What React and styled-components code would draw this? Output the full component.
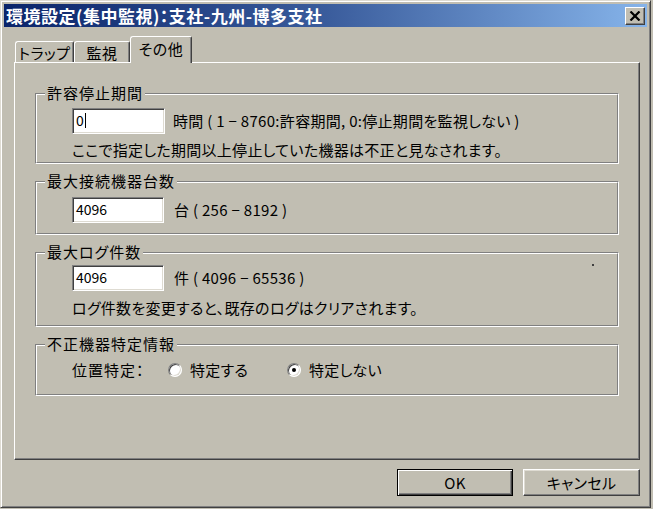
import React from 'react';
import styled, { createGlobalStyle, css } from 'styled-components';

const FACE = '#c1beb2';

const GlobalStyle = createGlobalStyle`
  html, body { margin: 0; padding: 0; background: ${FACE}; }
  body {
    font-family: "Noto Sans CJK JP", "Noto Sans", sans-serif;
    font-size: 15px;
    color: #000;
    font-feature-settings: "palt";
    letter-spacing: 0.3px;
  }
  #root { width: 653px; height: 509px; }
`;

const Window = styled.div`
  box-sizing: border-box;
  width: 651px;
  height: 508px;
  background: ${FACE};
  border: 1px solid;
  border-color: #dedbd2 #404040 #404040 #dedbd2;
  box-shadow: inset 1px 1px #fff, inset -1px -1px #808080;
  padding: 3px;
  display: flex;
  flex-direction: column;
`;

const TitleBar = styled.div`
  flex: none;
  height: 23px;
  display: flex;
  align-items: center;
  justify-content: space-between;
  padding: 0 2px 0 2px;
  background: linear-gradient(to right, #0a246a 0%, #3a5c9c 50%, #86b4ea 100%);
  color: #fff;
`;

const TitleText = styled.span`
  font-weight: 700;
  font-size: 17px;
  letter-spacing: 0.5px;
  line-height: 23px;
  white-space: nowrap;
`;

const CloseButton = styled.div`
  box-sizing: border-box;
  width: 20px;
  height: 18px;
  background: ${FACE};
  border: 1px solid;
  border-color: #fff #404040 #404040 #fff;
  box-shadow: inset -1px -1px #808080;
  display: flex;
  align-items: center;
  justify-content: center;
`;

const Body = styled.div`
  flex: 1;
  display: flex;
  flex-direction: column;
  padding: 9px 7px 0 10px;
`;

const TabStrip = styled.div`
  position: relative;
  z-index: 1;
  height: 26px;
  display: flex;
  align-items: flex-end;
  padding-left: 1px;
`;

const Tab = styled.div`
  box-sizing: border-box;
  width: ${p => p.$w}px;
  height: ${p => (p.$active ? 27 : 21)}px;
  margin-bottom: ${p => (p.$active ? -1 : 0)}px;
  padding-bottom: ${p => (p.$active ? 3 : 0)}px;
  background: ${FACE};
  border-left: 1px solid #fff;
  border-top: 1px solid #fff;
  border-right: 1px solid #404040;
  border-top-left-radius: 3px;
  border-top-right-radius: 2px;
  box-shadow: inset -1px 0 #808080;
  display: flex;
  align-items: center;
  justify-content: center;
  white-space: nowrap;
  letter-spacing: 0.5px;
`;

const Panel = styled.div`
  box-sizing: border-box;
  height: 398px;
  border: 1px solid;
  border-color: #fff #404040 #404040 #fff;
  box-shadow: inset -1px -1px #808080;
  padding: 30px 20px 0 20px;
  display: flex;
  flex-direction: column;
  gap: ${p => p.$gap}px;
`;

const Group = styled.div`
  position: relative;
  box-sizing: border-box;
  height: ${p => p.$h}px;
  border: 1px solid;
  border-color: #808080 #fff #fff #808080;
`;

const GroupInner = styled.div`
  box-sizing: border-box;
  height: 100%;
  border: 1px solid;
  border-color: #fff #808080 #808080 #fff;
  padding: ${p => p.$pt}px 0 0 35px;
  display: flex;
  flex-direction: column;
  gap: ${p => p.$gap || 0}px;
`;

const Legend = styled.span`
  position: absolute;
  top: -10px;
  left: 9px;
  padding: 0 2px;
  background: ${FACE};
  line-height: 18px;
  white-space: nowrap;
  letter-spacing: 1px;
`;

const Row = styled.div`
  display: flex;
  align-items: center;
  gap: ${p => p.$gap || 0}px;
  white-space: nowrap;
  line-height: 18px;
`;

const TextLine = styled.div`
  line-height: 18px;
  white-space: nowrap;
`;

const Field = styled.div`
  box-sizing: border-box;
  width: ${p => p.$w}px;
  height: 26px;
  background: #fff;
  border: 1px solid;
  border-color: #808080 #fff #fff #808080;
  box-shadow: inset 1px 1px #404040, inset -1px -1px #dedbd2;
  padding: 2px 0 0 3px;
  line-height: 18px;
  font-size: 14px;
  letter-spacing: 0;
  display: flex;
  align-items: flex-start;
`;

const Caret = styled.span`
  display: inline-block;
  width: 1px;
  height: 15px;
  margin: 2px 0 0 1px;
  background: #000;
`;

const Speck = styled.span`
  position: absolute;
  top: 11px;
  left: 556px;
  width: 2px;
  height: 2px;
  background: #404040;
`;

const RadioOption = styled.label`
  display: flex;
  align-items: center;
  gap: 8px;
  width: ${p => (p.$w ? `${p.$w}px` : 'auto')};
`;

const RadioCircle = styled.span`
  box-sizing: border-box;
  width: 14px;
  height: 14px;
  border-radius: 50%;
  border: 1px solid;
  border-color: #808080 #fff #fff #808080;
  box-shadow: inset 1px 1px #404040, inset -1px -1px #dedbd2;
  background: #fff;
  display: flex;
  align-items: center;
  justify-content: center;
  ${p => p.$checked && css`
    &::after {
      content: '';
      width: 4px;
      height: 4px;
      border-radius: 50%;
      background: #000;
    }
  `}
`;

const PositionLabel = styled.span`
  width: 96px;
  letter-spacing: 1px;
`;

const ButtonRow = styled.div`
  margin-top: 9px;
  display: flex;
  justify-content: flex-end;
  gap: 10px;
`;

const Button = styled.div`
  box-sizing: border-box;
  width: ${p => p.$w}px;
  height: 27px;
  background: ${FACE};
  display: flex;
  align-items: center;
  justify-content: center;
  white-space: nowrap;
  ${p => p.$default
    ? css`
        border: 1px solid #000;
        box-shadow: inset 1px 1px #fff, inset -1px -1px #404040, inset -2px -2px #808080;
      `
    : css`
        border: 1px solid;
        border-color: #fff #404040 #404040 #fff;
        box-shadow: inset -1px -1px #808080, inset 1px 1px #dedbd2;
      `}
`;

export default function App() {
  return (
    <>
      <GlobalStyle />
      <Window>
        <TitleBar>
          <TitleText>環境設定(集中監視)：支社-九州-博多支社</TitleText>
          <CloseButton>
            <svg width="12" height="10" viewBox="0 0 12 10">
              <path d="M1.5 0.5 L10.5 9.5 M10.5 0.5 L1.5 9.5" stroke="#000" strokeWidth="2.2" />
            </svg>
          </CloseButton>
        </TitleBar>
        <Body>
          <TabStrip>
            <Tab $w={59}>トラップ</Tab>
            <Tab $w={56}>監視</Tab>
            <Tab $w={62} $active>その他</Tab>
          </TabStrip>
          <Panel $gap={17}>
            <Group $h={71}>
              <Legend>許容停止期間</Legend>
              <GroupInner $pt={13} $gap={7}>
                <Row $gap={8}>
                  <Field $w={93}>0<Caret /></Field>
                  <span>時間 ( 1 − 8760:許容期間, 0:停止期間を監視しない )</span>
                </Row>
                <TextLine>ここで指定した期間以上停止していた機器は不正と見なされます。</TextLine>
              </GroupInner>
            </Group>
            <Group $h={54}>
              <Legend>最大接続機器台数</Legend>
              <GroupInner $pt={14}>
                <Row $gap={10}>
                  <Field $w={92}>4096</Field>
                  <span>台 ( 256 − 8192 )</span>
                </Row>
              </GroupInner>
            </Group>
            <Group $h={75}>
              <Legend>最大ログ件数</Legend>
              <Speck />
              <GroupInner $pt={11} $gap={8}>
                <Row $gap={10}>
                  <Field $w={92}>4096</Field>
                  <span>件 ( 4096 − 65536 )</span>
                </Row>
                <TextLine>ログ件数を変更すると、既存のログはクリアされます。</TextLine>
              </GroupInner>
            </Group>
            <Group $h={52}>
              <Legend>不正機器特定情報</Legend>
              <GroupInner $pt={15}>
                <Row>
                  <PositionLabel>位置特定：</PositionLabel>
                  <RadioOption $w={119}>
                    <RadioCircle />
                    <span>特定する</span>
                  </RadioOption>
                  <RadioOption>
                    <RadioCircle $checked />
                    <span>特定しない</span>
                  </RadioOption>
                </Row>
              </GroupInner>
            </Group>
          </Panel>
          <ButtonRow>
            <Button $w={116} $default>OK</Button>
            <Button $w={117}>キャンセル</Button>
          </ButtonRow>
        </Body>
      </Window>
    </>
  );
}
